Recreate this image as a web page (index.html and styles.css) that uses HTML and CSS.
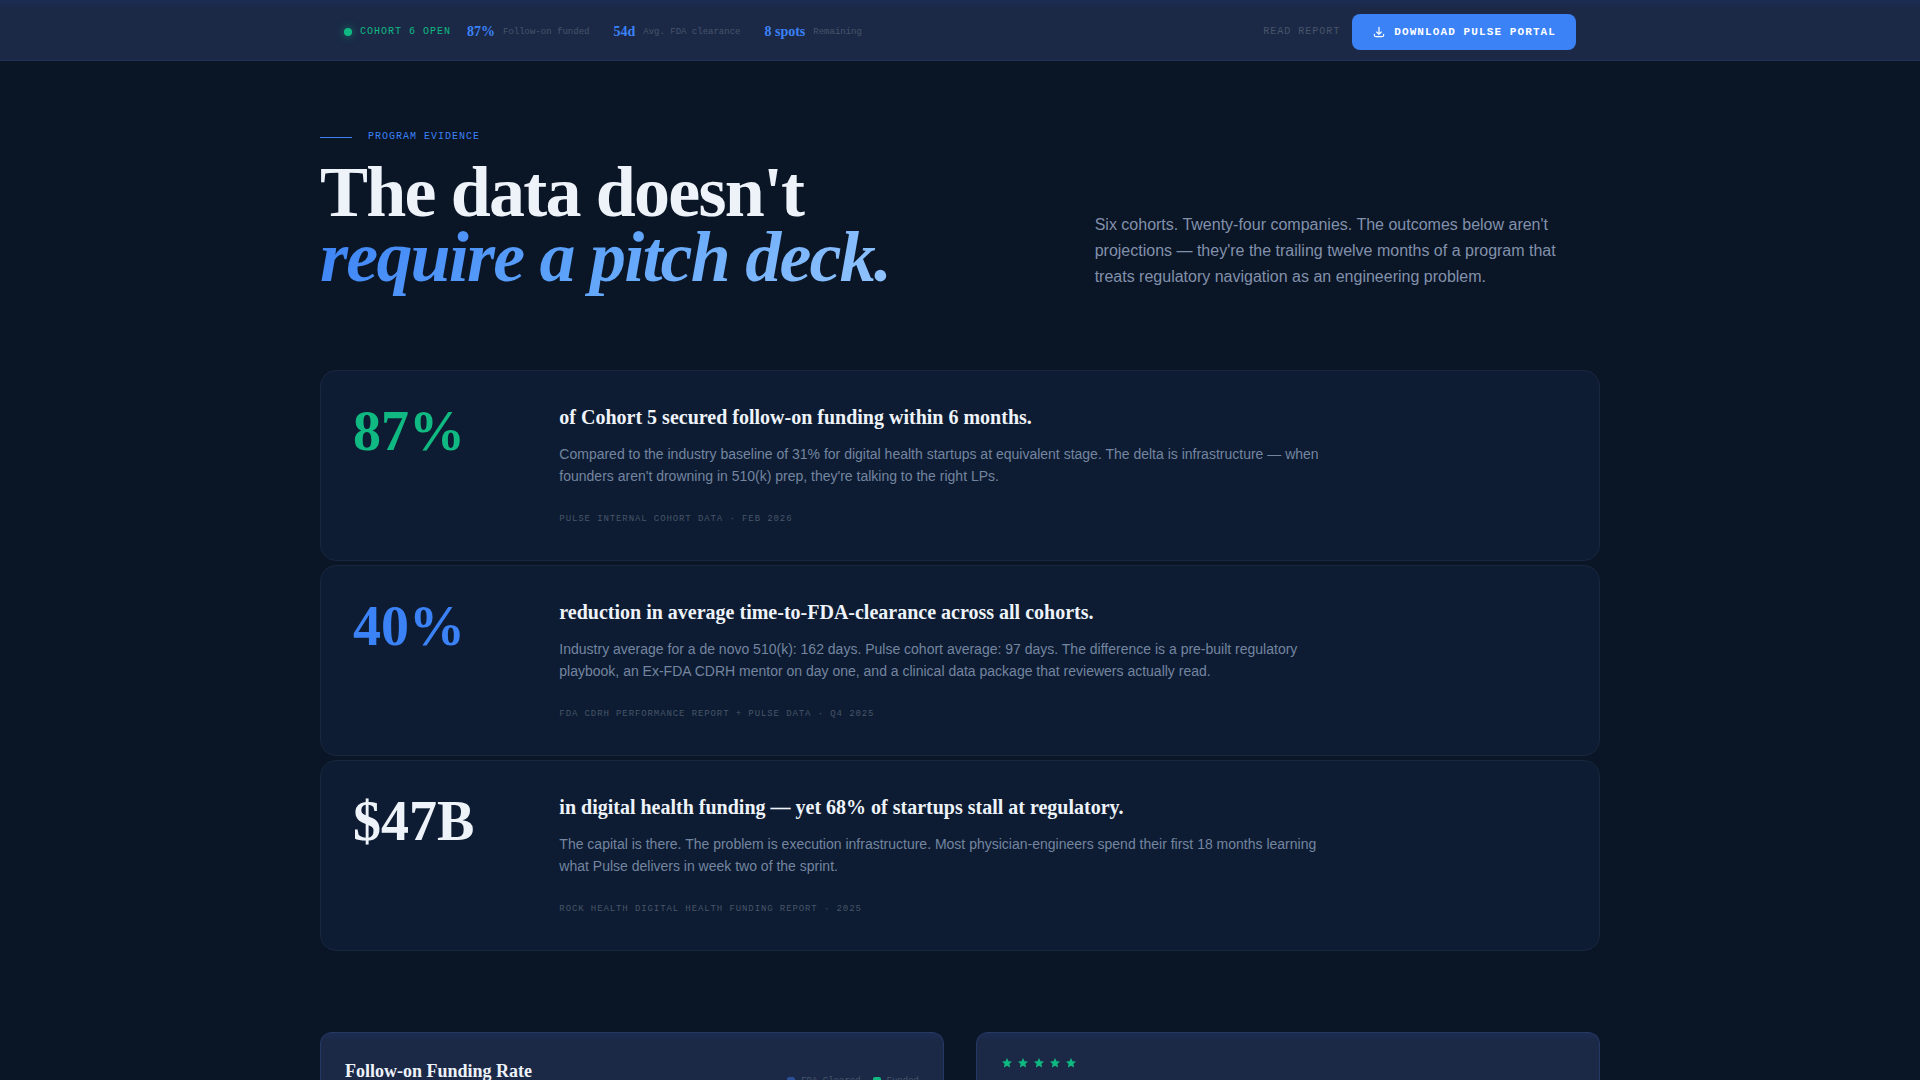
FILE: index.html
```html
<!DOCTYPE html>
<html lang="en">
<head>
    <meta charset="UTF-8">
    <meta name="viewport" content="width=device-width, initial-scale=1.0">
    <title>Pulse - Program Evidence</title>
    <link rel="stylesheet" href="styles.css">
</head>
<body>
    <!-- top bar -->
    <header class="topbar">
        <div class="topbar-inner">
            <div class="status">
                <span class="dot"></span>
                <span class="status-text">COHORT 6 OPEN</span>
            </div>
            <ul class="quick-stats">
                <li><strong>87%</strong><span>Follow-on funded</span></li>
                <li><strong>54d</strong><span>Avg. FDA clearance</span></li>
                <li><strong>8 spots</strong><span>Remaining</span></li>
            </ul>
            <div class="actions">
                <a class="report-link" href="#report">READ REPORT</a>
                <button class="btn" type="button">
                    <svg width="14" height="14" viewBox="0 0 24 24" fill="none" stroke="currentColor" stroke-width="2" stroke-linecap="round" stroke-linejoin="round" aria-hidden="true">
                        <path d="M4 16v1a3 3 0 003 3h10a3 3 0 003-3v-1m-4-4l-4 4m0 0l-4-4m4 4V4"/>
                    </svg>
                    DOWNLOAD PULSE PORTAL
                </button>
            </div>
        </div>
    </header>

    <main class="container">
        <!-- intro -->
        <section class="intro">
            <div class="intro-title">
                <p class="eyebrow">PROGRAM EVIDENCE</p>
                <h1>The data doesn't<br><em>require a pitch deck.</em></h1>
            </div>
            <p class="intro-text">Six cohorts. Twenty-four companies. The outcomes below aren't projections — they're the trailing twelve months of a program that treats regulatory navigation as an engineering problem.</p>
        </section>

        <!-- evidence rows -->
        <section class="evidence">
            <article class="fact">
                <div class="fact-number green">87%</div>
                <div class="fact-body">
                    <h2>of Cohort 5 secured follow-on funding within 6 months.</h2>
                    <p>Compared to the industry baseline of 31% for digital health startups at equivalent stage. The delta is infrastructure — when founders aren't drowning in 510(k) prep, they're talking to the right LPs.</p>
                    <small>PULSE INTERNAL COHORT DATA · FEB 2026</small>
                </div>
            </article>
            <article class="fact">
                <div class="fact-number blue">40%</div>
                <div class="fact-body">
                    <h2>reduction in average time-to-FDA-clearance across all cohorts.</h2>
                    <p>Industry average for a de novo 510(k): 162 days. Pulse cohort average: 97 days. The difference is a pre-built regulatory playbook, an Ex-FDA CDRH mentor on day one, and a clinical data package that reviewers actually read.</p>
                    <small>FDA CDRH PERFORMANCE REPORT + PULSE DATA · Q4 2025</small>
                </div>
            </article>
            <article class="fact">
                <div class="fact-number">$47B</div>
                <div class="fact-body">
                    <h2>in digital health funding — yet 68% of startups stall at regulatory.</h2>
                    <p>The capital is there. The problem is execution infrastructure. Most physician-engineers spend their first 18 months learning what Pulse delivers in week two of the sprint.</p>
                    <small>ROCK HEALTH DIGITAL HEALTH FUNDING REPORT · 2025</small>
                </div>
            </article>
        </section>

        <!-- chart + testimonial -->
        <section class="panels">
            <article class="panel">
                <div class="panel-head">
                    <h2>Follow-on Funding Rate</h2>
                    <ul class="legend">
                        <li><i class="swatch"></i>FDA Cleared</li>
                        <li><i class="swatch funded"></i>Funded</li>
                    </ul>
                </div>
            </article>
            <article class="panel">
                <svg class="stars" width="76" height="12" viewBox="0 0 76 12" fill="currentColor" role="img" aria-label="5 out of 5">
                    <defs>
                        <path id="star" d="M6 1l1.5 3.2 3.5.4-2.6 2.4.7 3.5L6 8.8l-3.100 1.700.7-3.500L1 4.600l3.500-.4z"/>
                    </defs>
                    <use href="#star"/>
                    <use href="#star" x="16"/>
                    <use href="#star" x="32"/>
                    <use href="#star" x="48"/>
                    <use href="#star" x="64"/>
                </svg>
            </article>
        </section>
    </main>
</body>
</html>
```
FILE: styles.css
```css
* {
    box-sizing: border-box;
    margin: 0;
    padding: 0;
}

body {
    background: #0a1526;
    color: #eef3f9;
    font-family: "Liberation Sans", Arial, sans-serif;
}

ul {
    list-style: none;
}

h1, h2, strong, .fact-number {
    font-family: "Liberation Serif", "Times New Roman", serif;
    font-weight: bold;
}

/* top bar */
.topbar {
    background: linear-gradient(#1b2d54, #1b2947 8px);
    border-bottom: 1px solid #1f3054;
}

.topbar-inner {
    display: flex;
    align-items: center;
    gap: 16px;
    max-width: 1280px;
    margin: 0 auto;
    padding: 14px 24px 10px;
}

.status {
    display: flex;
    align-items: center;
    gap: 8px;
}

.dot {
    width: 8px;
    height: 8px;
    border-radius: 50%;
    background: #10b981;
    box-shadow: 0 0 8px rgba(16, 185, 129, .6);
}

.status-text, .report-link, .eyebrow {
    font-family: "Liberation Mono", "Courier New", monospace;
    font-size: 10px;
    line-height: 16px;
    letter-spacing: 1px;
}

.status-text {
    color: #10b981;
}

.quick-stats {
    display: flex;
    gap: 24px;
}

.quick-stats li {
    display: flex;
    align-items: center;
    gap: 8px;
}

.quick-stats strong {
    color: #3b82f6;
    font-size: 14px;
    line-height: 20px;
}

.quick-stats span, .legend, .fact small {
    color: #475569;
    font-family: "Liberation Mono", "Courier New", monospace;
    font-size: 9px;
    line-height: 17px;
}

.actions {
    display: flex;
    align-items: center;
    gap: 12px;
    margin-left: auto;
}

.report-link {
    color: #475569;
    text-decoration: none;
}

.btn {
    display: flex;
    align-items: center;
    gap: 8px;
    padding: 10px 20px;
    border: 0;
    border-radius: 8px;
    background: #3b82f6;
    color: #fff;
    font: bold 11px/16px "Liberation Mono", "Courier New", monospace;
    letter-spacing: .1em;
    cursor: pointer;
}

/* intro */
.container {
    max-width: 1280px;
    margin: 0 auto;
    padding-top: 68px;
}

.intro {
    display: grid;
    grid-template-columns: repeat(12, 1fr);
    column-gap: 48px;
    align-items: end;
}

.intro-title {
    grid-column: span 7;
}

.eyebrow {
    display: flex;
    align-items: center;
    gap: 16px;
    margin-bottom: 15px;
    color: #3b82f6;
}

.eyebrow::before {
    content: "";
    width: 32px;
    height: 1px;
    background: #3b82f6;
}

h1 {
    font-size: 72px;
    line-height: 65px;
    letter-spacing: -.025em;
}

h1 em {
    background: linear-gradient(135deg, #3b82f6, #60a5fa 50%, #93c5fd);
    -webkit-background-clip: text;
    background-clip: text;
    color: transparent;
}

.intro-text {
    grid-column: span 5;
    color: #8291ab;
    font-size: 16px;
    line-height: 26px;
}

/* evidence rows */
.evidence {
    display: grid;
    gap: 4px;
    margin-top: 80px;
}

.fact {
    display: grid;
    grid-template-columns: repeat(12, 1fr);
    column-gap: 24px;
    padding: 32px;
    border: 1px solid #18273f;
    border-radius: 16px;
    background: #0d1c32;
}

.fact-number {
    grid-column: span 2;
    font-size: 56px;
    line-height: 56px;
}

.green {
    color: #10b981;
}

.blue {
    color: #3b82f6;
}

.fact-body {
    grid-column: span 10;
    max-width: 768px;
}

.fact h2 {
    margin-bottom: 12px;
    font-size: 20px;
    line-height: 28px;
}

.fact p {
    margin-bottom: 24px;
    color: #7485a0;
    font-size: 14px;
    line-height: 22px;
}

.fact small {
    display: block;
    letter-spacing: .1em;
}

/* chart + testimonial */
.panels {
    display: grid;
    grid-template-columns: 1fr 1fr;
    gap: 32px;
    margin-top: 81px;
}

.panel {
    padding: 24px;
    border: 1px solid #263864;
    border-bottom: 0;
    border-radius: 12px 12px 0 0;
    background: linear-gradient(#1b2c52, #1b2947 8px);
}

.panel-head {
    display: flex;
    justify-content: space-between;
    align-items: center;
    min-height: 48px;
}

.panel-head h2 {
    align-self: flex-start;
    font-size: 18px;
    line-height: 28px;
}

.legend {
    display: flex;
    gap: 12px;
}

.legend li {
    display: flex;
    align-items: center;
    gap: 6px;
}

.swatch {
    width: 8px;
    height: 8px;
    border-radius: 2px;
    background: #2a4f96;
}

.funded {
    background: #10b981;
}

.stars {
    display: block;
    color: #10b981;
}
```
